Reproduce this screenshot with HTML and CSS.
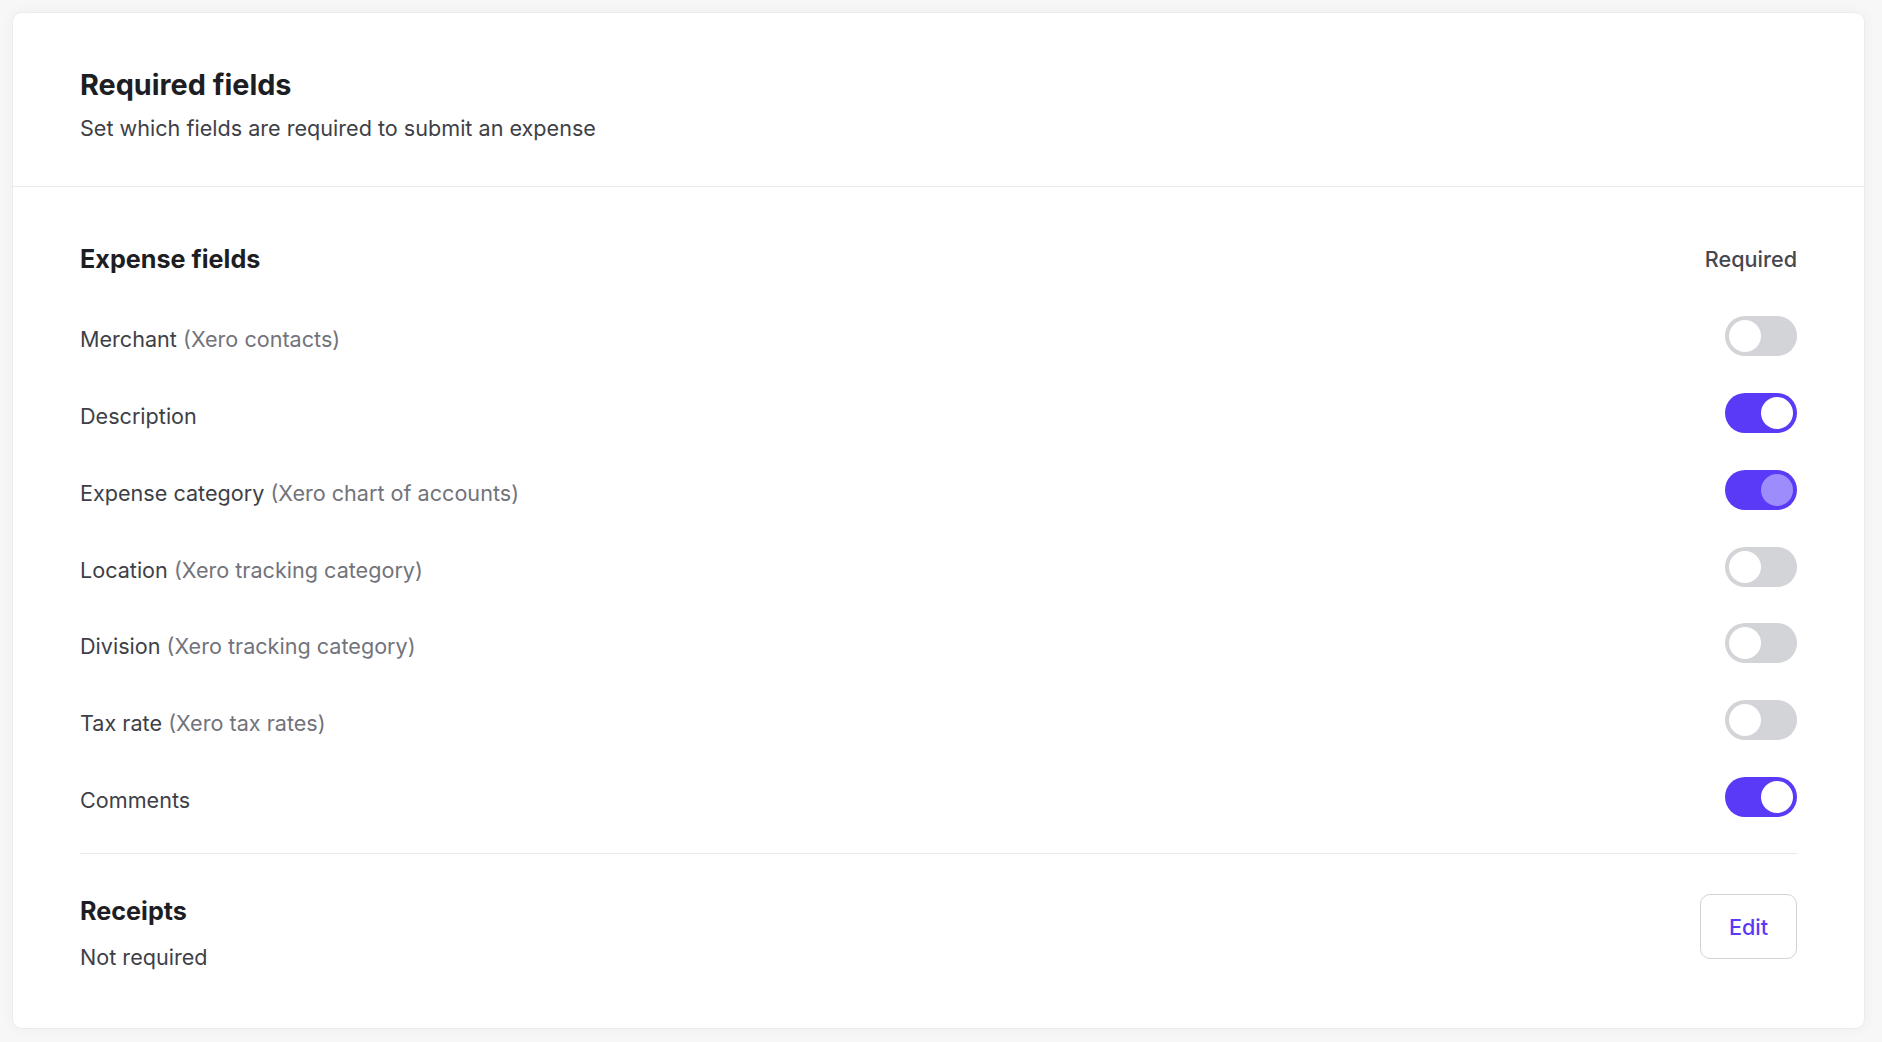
FILE: index.html
```html
<!DOCTYPE html>
<html lang="en">
<head>
    <meta charset="UTF-8">
    <meta name="viewport" content="width=device-width, initial-scale=1.0">
    <title>Required fields</title>
    <link rel="stylesheet" href="styles.css">
</head>
<body>
    <div class="card">
        <div class="card-header">
            <h1>Required fields</h1>
            <p>Set which fields are required to submit an expense</p>
        </div>

        <div class="card-body">
            <div class="field-list">
                <div class="field-row field-head">
                    <h2>Expense fields</h2>
                    <span class="col-label">Required</span>
                </div>
                <div class="field-row">
                    <span class="field-name">Merchant <span class="field-source">(Xero contacts)</span></span>
                    <span class="toggle"></span>
                </div>
                <div class="field-row">
                    <span class="field-name">Description</span>
                    <span class="toggle toggle-on"></span>
                </div>
                <div class="field-row">
                    <span class="field-name">Expense category <span class="field-source">(Xero chart of accounts)</span></span>
                    <span class="toggle toggle-on toggle-locked"></span>
                </div>
                <div class="field-row">
                    <span class="field-name">Location <span class="field-source">(Xero tracking category)</span></span>
                    <span class="toggle"></span>
                </div>
                <div class="field-row">
                    <span class="field-name">Division <span class="field-source">(Xero tracking category)</span></span>
                    <span class="toggle"></span>
                </div>
                <div class="field-row">
                    <span class="field-name">Tax rate <span class="field-source">(Xero tax rates)</span></span>
                    <span class="toggle"></span>
                </div>
                <div class="field-row">
                    <span class="field-name">Comments</span>
                    <span class="toggle toggle-on"></span>
                </div>
            </div>

            <div class="receipts">
                <div>
                    <h2>Receipts</h2>
                    <p>Not required</p>
                </div>
                <button class="edit-button">Edit</button>
            </div>
        </div>
    </div>
</body>
</html>
```

FILE: styles.css
```css
* {
    margin: 0;
    padding: 0;
    box-sizing: border-box;
}

body {
    font-family: 'Inter', 'Noto Sans', sans-serif;
    background: #f7f7f8;
    color: #3e3f47;
    padding: 12px 17px 13px 12px;
}

.card {
    background: #fff;
    border: 1px solid #ececee;
    border-radius: 10px;
    box-shadow: 0 0 14px rgba(0, 0, 0, 0.04);
    padding: 0 67px;
}

/* header */
.card-header {
    margin: 0 -67px;
    padding: 56px 67px 44px;
    border-bottom: 1px solid #e9e9ec;
}

.card-header h1 {
    font-size: 28.8px;
    line-height: 32px;
    font-weight: 700;
    color: #1d1e23;
}

.card-header p {
    margin-top: 13px;
    font-size: 21.6px;
    line-height: 28px;
}

/* expense fields */
.card-body {
    padding-top: 34px;
}

.field-row {
    height: 76.8px;
    display: flex;
    align-items: center;
    justify-content: space-between;
}

.field-row h2,
.receipts h2 {
    font-size: 25.2px;
    line-height: 30px;
    font-weight: 700;
    color: #1d1e23;
}

.col-label {
    font-size: 21.6px;
    font-weight: 500;
    color: #46474f;
}

.field-name {
    font-size: 21.6px;
    padding-top: 6px;
}

.field-source {
    color: #72737b;
}

.toggle {
    position: relative;
    width: 72px;
    height: 40px;
    border-radius: 20px;
    background: #d3d4d8;
}

.toggle::after {
    content: '';
    position: absolute;
    top: 4px;
    left: 4px;
    width: 32px;
    height: 32px;
    border-radius: 50%;
    background: #fff;
}

.toggle-on {
    background: #5a3af6;
}

.toggle-on::after {
    left: 36px;
}

.toggle-locked::after {
    background: #9d8cfb;
}

/* receipts */
.receipts {
    margin-top: 18px;
    border-top: 1px solid #e9e9ec;
    padding: 42px 0 57px;
    display: flex;
    justify-content: space-between;
    align-items: flex-start;
}

.receipts p {
    margin-top: 17px;
    font-size: 21.6px;
    line-height: 28px;
}

.edit-button {
    margin-top: -2px;
    width: 97px;
    height: 65px;
    background: #fff;
    border: 1.5px solid #d3d3d7;
    border-radius: 10px;
    font-family: inherit;
    font-size: 21.6px;
    font-weight: 500;
    color: #5a3af6;
    cursor: pointer;
}
```
